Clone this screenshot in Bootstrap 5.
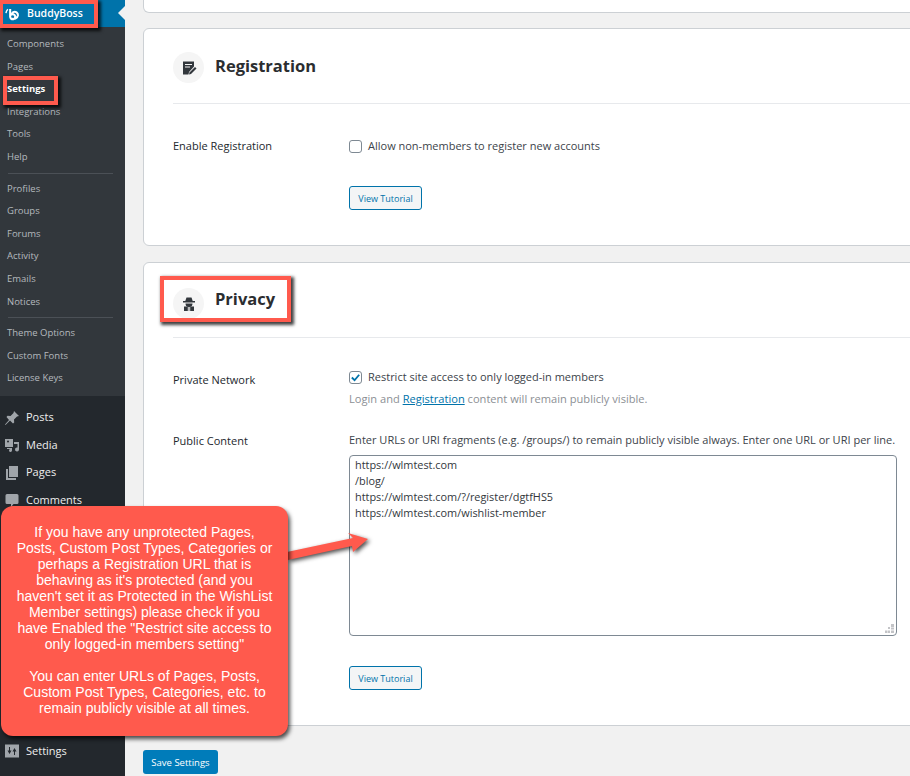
<!DOCTYPE html>
<html lang="en"><head><meta charset="utf-8"><title>BuddyBoss Settings</title>
<link rel="stylesheet" href="https://cdn.jsdelivr.net/npm/bootstrap@5.3.0/dist/css/bootstrap.min.css">
<style>
html,body{height:100%;overflow:hidden}
body{font-family:"Open Sans","Noto Sans",sans-serif;font-size:11px;color:#3c434a;background:#f1f1f1}
.shell{height:776px;position:relative}
.side{width:125px;flex:none;background:#23282d;color:#eee;height:776px}
.side-top{background:#0073aa;height:27px;color:#fff;font-size:10.5px;font-weight:600;padding:1px 0 0 5px;position:relative;gap:7px}
.side-top:after{content:"";position:absolute;right:0;top:6px;border:7px solid transparent;border-right-color:#f1f1f1;border-left:0}
.side-sub{background:#32373c;padding:6px 0 6px;color:#b4b9be;font-size:9.5px}
.sub-item{height:22.6px;line-height:22.6px;padding-left:7px}
.sub-item.on{color:#fff;font-weight:700}
.sub-sep{height:1px;background:#4b5056;margin:4px 12px 4px 8px}
.main-item{height:27.5px;padding-left:4px;gap:6px;font-size:11px;color:#eee}
.main-item svg{width:16px;height:16px;fill:#a0a5aa;flex:none}
.main-list{padding-top:8px}
.side-end{margin-top:auto;padding-bottom:11px}
.content{padding:0 0 0 18px;min-width:0;flex:1}
.panel{background:#fff;border:1px solid #ccd0d4;border-radius:6px;width:790px;padding:0 0 0 29px}
.panel-cut{height:13px;border-top:0;border-radius:0 0 6px 6px;margin-bottom:15px}
.panel-reg{height:218px;margin-bottom:16px;padding-top:23px}
.panel-priv{height:464px;padding-top:25px;margin-bottom:24px}
.head-row{height:52px;border-bottom:1px solid #e7e9ec;gap:11px;align-items:flex-start}
.head-row.short{height:50px}
.circle{width:31px;height:31px;border-radius:50%;background:#f5f5f5;flex:none}
.circle svg{width:16px;height:16px;fill:#32373c}
.title{font-size:16.5px;font-weight:700;color:#2b2d30;margin:0;line-height:27px}
.title.tight{line-height:22px}
.lab{width:176px;flex:none;color:#23282d;font-size:11px}
.chk{width:13px;height:13px;border:1px solid #7e8993;border-radius:3px;background:#fff;flex:none;margin-right:6px}
.chk svg{width:11px;height:11px;stroke:#0073aa;stroke-width:2;fill:none}
.hint{color:#8c8f94;font-size:11.1px}
.hint a{color:#0073aa}
.tut{display:block;width:73px;height:24px;line-height:23px;font-size:9px;text-align:center;color:#0073aa;background:#f3f5f6;border:1px solid #0073aa;border-radius:3px;padding:0}
.url-wrap{width:548px;height:181px;position:relative}
.url-box{width:100%;height:100%;border:1px solid #7e8993;border-radius:4px;padding:1px 5px;font-size:10.9px;line-height:16px;color:#32373c;font-family:inherit;display:block;resize:none}
.grip{position:absolute;right:3px;bottom:3px;width:9px;height:9px;fill:#c3c4c7}
.save{background:#007cba;color:#fff;font-size:9.5px;border:0;border-radius:3px;width:75px;height:24px;padding:2px 0 0}
.mark-box{position:absolute;border:4px solid #ff5a4d;box-shadow:2px 2px 3px 1px rgba(0,0,0,.75);pointer-events:none}
.note{position:absolute;left:1px;top:506px;width:287px;height:230px;background:#ff5a4d;border-radius:12px;box-shadow:2px 3px 4px rgba(0,0,0,.7);color:#fff;font-family:"Liberation Sans",Arial,sans-serif;font-size:14px;line-height:16px;text-align:center;padding:18px 14px 0}
.note p{margin:0 0 16px}
.arrow{position:absolute;left:285px;top:530px;width:90px;height:34px;overflow:visible}
.row-reg{margin-top:34px}
.tut-reg{margin:31px 0 0 176px}
.row-net{margin-top:31px}
.row-pub{margin-top:25px}
.lab-net{padding-top:3px}
.lab-pub{padding-top:1px}
.hint-gap{margin-top:5px}
.pub-intro{margin-bottom:6px;white-space:nowrap;font-size:11.03px}
.tut-pub{margin-top:30px}
</style></head>
<body>
<div class="shell d-flex">
<nav class="side d-flex flex-column">
 <div class="side-top d-flex align-items-center">
  <svg width="15" height="15" viewBox="0 0 16 16" fill="none" stroke="#fff" stroke-width="2.200"><path d="M5.500 2v8.500a2.700 2.700 0 1 0 .8-2l2.500-3a3.500 3.500 0 0 1 5 3.500 4.500 4.500 0 0 1-7 3"/><path d="M1 6.500a7 7 0 0 1 2-4" stroke-width="1.500"/></svg>
  <span>BuddyBoss</span></div>
 <div class="side-sub">
  <div class="sub-item">Components</div><div class="sub-item">Pages</div><div class="sub-item on">Settings</div><div class="sub-item">Integrations</div><div class="sub-item">Tools</div><div class="sub-item">Help</div>
  <div class="sub-sep"></div>
  <div class="sub-item">Profiles</div><div class="sub-item">Groups</div><div class="sub-item">Forums</div><div class="sub-item">Activity</div><div class="sub-item">Emails</div><div class="sub-item">Notices</div>
  <div class="sub-sep"></div>
  <div class="sub-item">Theme Options</div><div class="sub-item">Custom Fonts</div><div class="sub-item">License Keys</div>
 </div>
 <div class="main-list">
  <div class="main-item d-flex align-items-center"><svg viewBox="0 0 16 16"><path d="M10 1l5 5-2 .5-3 3 .2 3-1.200 1L6 10.500 1.500 15 1 14.500 5 10 2.500 7l1-1.200 3 .2 3-3z"/></svg><span>Posts</span></div>
  <div class="main-item d-flex align-items-center"><svg viewBox="0 0 16 16"><path d="M1 2h8v8H1zM3 4.500a1 1 0 1 0 2 0 1 1 0 0 0-2 0zM10 5h5v7.500a2 2 0 1 1-1.500-2V7H10zM3 11h5v2.500a1.500 1.500 0 1 1-1.200-1.500H3z"/></svg><span>Media</span></div>
  <div class="main-item d-flex align-items-center"><svg viewBox="0 0 16 16"><path d="M5 1h9v11H5zM2 4h2v9h8v2H2z"/></svg><span>Pages</span></div>
  <div class="main-item d-flex align-items-center"><svg viewBox="0 0 16 16"><path d="M3 2h10a1.500 1.500 0 0 1 1.500 1.500v7A1.500 1.500 0 0 1 13 12H9.500L7 15v-3H3a1.500 1.500 0 0 1-1.500-1.500v-7A1.500 1.500 0 0 1 3 2z"/></svg><span>Comments</span></div>
 </div>
 <div class="side-end">
  <div class="main-item d-flex align-items-center"><svg viewBox="0 0 16 16"><path fill-rule="evenodd" d="M1 1.500h14v13H1zM5 4v3.500H3.500L5.500 11l2-3.500H6V4zm5 8V8.500H8.500L10.500 5l2 3.500H11V12z"/></svg><span>Settings</span></div>
 </div>
</nav>
<main class="content">
 <div class="panel panel-cut"></div>
 <section class="panel panel-reg">
  <div class="head-row d-flex"><div class="circle d-flex align-items-center justify-content-center"><svg viewBox="0 0 16 16"><path d="M2 1.500h11v5L8 12l-.5 2.500H2zM4 4v1h7V4zm0 2.500v1h5v-1z"/><path d="M14 7l1.500 1.500-5.500 5.500-2 .5.500-2z"/></svg></div><h2 class="title">Registration</h2></div>
  <div class="d-flex align-items-center row-reg"><div class="lab">Enable Registration</div><span class="chk"></span><span>Allow non-members to register new accounts</span></div>
  <button class="tut btn tut-reg">View Tutorial</button>
 </section>
 <section class="panel panel-priv">
  <div class="head-row short d-flex"><div class="circle d-flex align-items-center justify-content-center"><svg viewBox="0 0 16 16"><path d="M5.500 1.500h5l1.200 3.500H14v1.500H2V5h2.300zM4.500 7.500h7a3 3 0 0 1-7 0z"/><path fill-rule="evenodd" d="M3 10.500h10V15H3zM6.800 11v4h.9v-4zm1.500 0v4h.9v-4z"/></svg></div><h2 class="title tight">Privacy</h2></div>
  <div class="d-flex row-net">
   <div class="lab lab-net">Private Network</div>
   <div><div class="d-flex align-items-center"><span class="chk d-flex align-items-center justify-content-center"><svg viewBox="0 0 12 12"><path d="M2 6l3 3 5-6"/></svg></span><span>Restrict site access to only logged-in members</span></div>
   <div class="hint hint-gap">Login and <a href="#">Registration</a> content will remain publicly visible.</div></div>
  </div>
  <div class="d-flex row-pub">
   <div class="lab lab-pub">Public Content</div>
   <div>
    <div class="pub-intro">Enter URLs or URI fragments (e.g. /groups/) to remain publicly visible always. Enter one URL or URI per line.</div>
    <div class="url-wrap"><textarea class="url-box" readonly>https://wlmtest.com
/blog/
https://wlmtest.com/?/register/dgtfHS5
https://wlmtest.com/wishlist-member</textarea>
    <svg class="grip" viewBox="0 0 9 9"><path d="M6 0h3v3H6zM3 3h2v2H3zM6 3.500h3v2H6zM0 6.500h2.500V9H0zM3 6.500h2V9H3zM6 6.500h3V9H6z"/></svg></div>
    <button class="tut btn tut-pub">View Tutorial</button>
   </div>
  </div>
 </section>
 <button class="save btn">Save Settings</button>
</main>
<div class="mark-box" style="left:0;top:0;width:98px;height:28px;border-left-width:3px"></div>
<div class="mark-box" style="left:3px;top:76px;width:55px;height:29px"></div>
<div class="mark-box" style="left:160px;top:276px;width:131px;height:46px"></div>
<svg class="arrow" viewBox="0 0 90 34"><path d="M2 22L68 8l-5-5 20 6-15 13-1-6L3 30z" fill="#ff5a4d" style="filter:drop-shadow(2px 2px 2px rgba(0,0,0,.7))"/></svg>
<div class="note"><p>If you have any unprotected Pages, Posts, Custom Post Types, Categories or perhaps a Registration URL that is behaving as it's protected (and you haven't set it as Protected in the WishList Member settings) please check if you have Enabled the "Restrict site access to only logged-in members setting"</p><p>You can enter URLs of Pages, Posts, Custom Post Types, Categories, etc. to remain publicly visible at all times.</p></div>
</div>
<script src="https://cdn.jsdelivr.net/npm/bootstrap@5.3.0/dist/js/bootstrap.bundle.min.js"></script>
</body></html>
